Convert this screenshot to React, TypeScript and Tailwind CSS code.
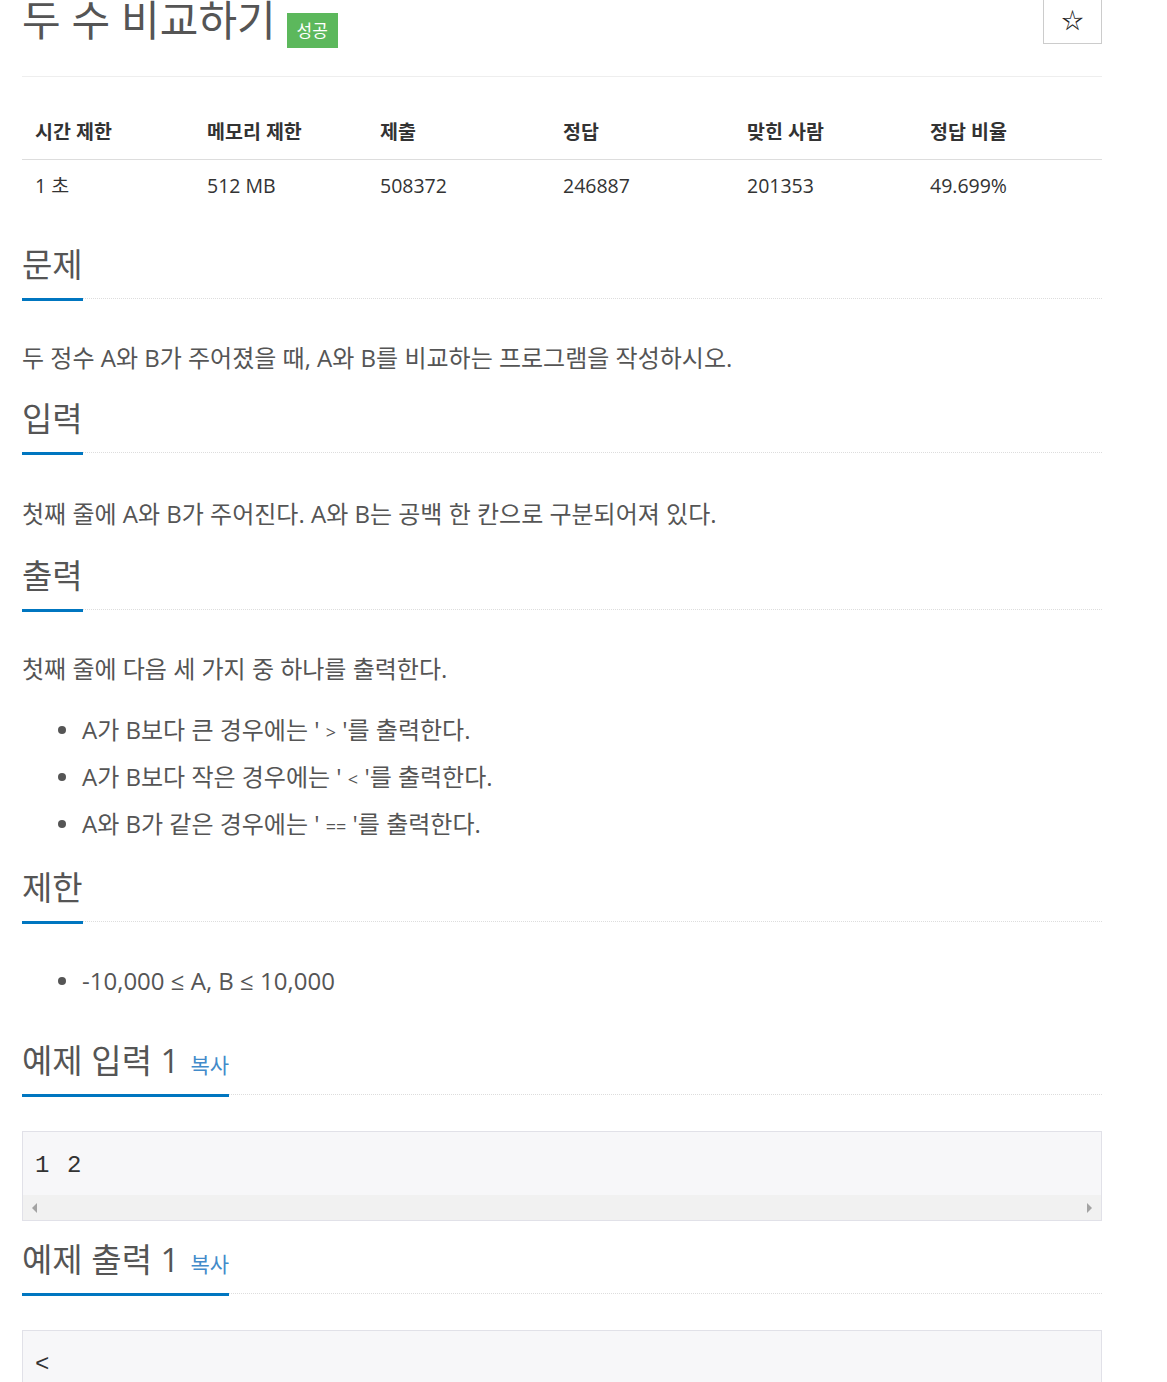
import type { ReactNode } from 'react';

const font = "font-['Open_Sans','Noto_Sans_CJK_KR',sans-serif]";

const stats = [
  { head: '시간 제한', value: '1 초', w: 'w-[172px]' },
  { head: '메모리 제한', value: '512 MB', w: 'w-[173px]' },
  { head: '제출', value: '508372', w: 'w-[183px]' },
  { head: '정답', value: '246887', w: 'w-[184px]' },
  { head: '맞힌 사람', value: '201353', w: 'w-[183px]' },
  { head: '정답 비율', value: '49.699%', w: 'w-[185px]' },
];

const SectionTitle = ({ children, className = '' }: { children: ReactNode; className?: string }) => (
  <div className={`flex border-b border-dotted border-[#ddd] ${className}`}>
    <h2 className="mb-[-3px] border-b-[3px] border-[#0076c0] pb-[13px] text-[33px] leading-[40px] font-normal text-[#555]">
      {children}
    </h2>
  </div>
);

const Copy = () => (
  <span className="ml-[11px] text-[21px] leading-none text-[#428bca]">복사</span>
);

const Bullet = ({ children }: { children: ReactNode }) => (
  <li className="flex items-center">
    <span className="mr-[16px] h-[8px] w-[8px] rounded-full bg-[#555]" />
    <span>{children}</span>
  </li>
);

// smaller glyph for the comparison operators
const Op = ({ children }: { children: ReactNode }) => (
  <span className="text-[18px] leading-none">{children}</span>
);

const Sample = ({ text }: { text: string }) => (
  <div className="mt-[36px] border border-[#e1e1e8] bg-[#f7f7f9]">
    <pre className="pt-[18px] pb-[14px] pl-[12px] font-['Liberation_Mono',monospace] text-[24px] leading-[31px] tracking-[1.6px] text-[#333]">
      {text}
    </pre>
    <div className="flex h-[25px] items-center justify-between bg-[#f1f1f1] px-[9px]">
      <span className="h-0 w-0 border-y-[5px] border-r-[5px] border-y-transparent border-r-[#a3a3a3]" />
      <span className="h-0 w-0 border-y-[5px] border-l-[5px] border-y-transparent border-l-[#a3a3a3]" />
    </div>
  </div>
);

export default function App() {
  return (
    <div className={`h-[1382px] overflow-hidden bg-white ${font}`}>
      <div className="ml-[22px] w-[1080px]">
        {/* Title */}
        <div className="flex h-[77px] items-start justify-between border-b border-[#eee]">
          <div className="flex items-start">
            <h1 className="text-[42px] leading-[40px] font-normal text-[#555]">두 수 비교하기</h1>
            <span className="ml-[11px] mt-[13px] flex h-[35px] w-[51px] items-center justify-center bg-[#5cb85c] text-[17px] text-white">
              성공
            </span>
          </div>
          <button className="-mt-[12px] h-[56px] w-[59px] border border-[#ccc] bg-white pt-[5px] text-[22px] leading-none text-[#222]">
            ☆
          </button>
        </div>

        {/* Stats table */}
        <div className="mt-[28px] text-[19.5px] text-[#333]">
          <div className="flex h-[55px] items-center border-b border-[#ddd] font-bold">
            {stats.map((s) => (
              <div key={s.head} className={`${s.w} pl-[13px]`}>
                {s.head}
              </div>
            ))}
          </div>
          <div className="flex h-[52px] items-center">
            {stats.map((s) => (
              <div key={s.head} className={`${s.w} pl-[13px]`}>
                {s.value}
              </div>
            ))}
          </div>
        </div>

        <div className="text-[24px] leading-[32px] text-[#555]">
          <SectionTitle className="mt-[33px]">문제</SectionTitle>
          <p className="mt-[43px]">두 정수 A와 B가 주어졌을 때, A와 B를 비교하는 프로그램을 작성하시오.</p>

          <SectionTitle className="mt-[25px]">입력</SectionTitle>
          <p className="mt-[45px]">첫째 줄에 A와 B가 주어진다. A와 B는 공백 한 칸으로 구분되어져 있다.</p>

          <SectionTitle className="mt-[26px]">출력</SectionTitle>
          <p className="mt-[43px]">첫째 줄에 다음 세 가지 중 하나를 출력한다.</p>
          <ul className="mt-[29px] flex flex-col gap-[15px] pl-[36px]">
            <Bullet>
              A가 B보다 큰 경우에는 ' <Op>&gt;</Op> '를 출력한다.
            </Bullet>
            <Bullet>
              A가 B보다 작은 경우에는 ' <Op>&lt;</Op> '를 출력한다.
            </Bullet>
            <Bullet>
              A와 B가 같은 경우에는 ' <Op>==</Op> '를 출력한다.
            </Bullet>
          </ul>

          <SectionTitle className="mt-[28px]">제한</SectionTitle>
          <ul className="mt-[43px] pl-[36px]">
            <Bullet>-10,000 ≤ A, B ≤ 10,000</Bullet>
          </ul>

          <SectionTitle className="mt-[44px]">
            예제 입력 1<Copy />
          </SectionTitle>
          <Sample text="1 2" />

          <SectionTitle className="mt-[19px]">
            예제 출력 1<Copy />
          </SectionTitle>
          <Sample text="<" />
        </div>
      </div>
    </div>
  );
}
